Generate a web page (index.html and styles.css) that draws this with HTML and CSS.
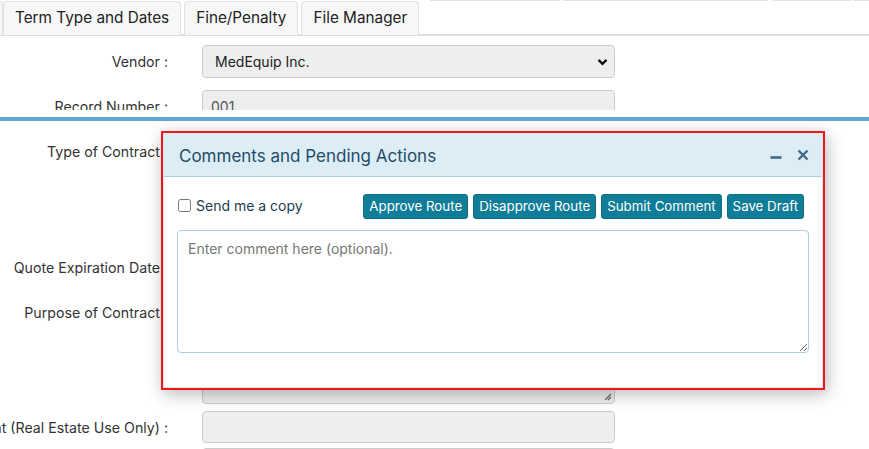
FILE: index.html
```html
<!DOCTYPE html>
<html lang="en">
<head>
<meta charset="utf-8">
<title>Contract</title>
<link rel="stylesheet" href="styles.css">
</head>
<body>
<div class="page">
  <div class="top-frame">
    <div class="tabs-above">
      <span class="seg seg1"></span>
      <span class="seg seg2"></span>
      <span class="seg seg3"></span>
      <span class="seg seg4"></span>
    </div>
    <div class="tabbar">
      <div class="tab tab-cut"></div>
      <div class="tab">Term Type and Dates</div>
      <div class="tab">Fine/Penalty</div>
      <div class="tab">File Manager</div>
    </div>
    <div class="form form-top">
      <div class="row">
        <div class="label">Vendor :</div>
        <div class="field select">
          <span>MedEquip Inc.</span>
          <svg class="chev" width="11" height="8" viewBox="0 0 11 8"><path d="M1.5 1.8 L5.5 5.8 L9.5 1.8" fill="none" stroke="#111" stroke-width="2.4"/></svg>
        </div>
      </div>
      <div class="row">
        <div class="label">Record Number :</div>
        <div class="field input muted">001</div>
      </div>
    </div>
  </div>
  <div class="bluebar"></div>
  <div class="form form-bottom">
    <div class="row">
      <div class="label">Type of Contract :</div>
      <div class="field input"></div>
    </div>
    <div class="row">
      <div class="label"></div>
      <div class="field spacer"></div>
    </div>
    <div class="row">
      <div class="label">Quote Expiration Date :</div>
      <div class="field input"></div>
    </div>
    <div class="row row-top gap-s">
      <div class="label">Purpose of Contract :</div>
      <div class="field area">
        <svg class="grip" width="9" height="9" viewBox="0 0 9 9"><path d="M8 2 L2 8 M8 5 L5 8" stroke="#666" stroke-width="1.2"/></svg>
      </div>
    </div>
    <div class="row gap-xs">
      <div class="label">Rent Amount (Real Estate Use Only) :</div>
      <div class="field input"></div>
    </div>
    <div class="row">
      <div class="label"></div>
      <div class="field input"></div>
    </div>
  </div>

  <div class="dialog">
    <div class="panel">
      <div class="panel-head">
        <div class="panel-title">Comments and Pending Actions</div>
        <div class="panel-tools">
          <svg width="12" height="12" viewBox="0 0 12 12"><path d="M0.5 8.5 H11.5" stroke="#3e6a85" stroke-width="2.6"/></svg>
          <svg width="12" height="12" viewBox="0 0 12 12"><path d="M1.5 1.5 L10.5 10.5 M10.5 1.5 L1.5 10.5" stroke="#3e6a85" stroke-width="2.4"/></svg>
        </div>
      </div>
      <div class="panel-body">
        <div class="actions">
          <label class="copy"><input type="checkbox"> Send me a copy</label>
          <div class="btns">
            <button class="btn">Approve Route</button>
            <button class="btn">Disapprove Route</button>
            <button class="btn">Submit Comment</button>
            <button class="btn">Save Draft</button>
          </div>
        </div>
        <textarea class="comment" placeholder="Enter comment here (optional)."></textarea>
      </div>
    </div>
  </div>
</div>
</body>
</html>
```

FILE: styles.css
```css
* { box-sizing: border-box; }
html, body { margin: 0; padding: 0; background: #fff; }
body {
  font-family: Inter, "Noto Sans", sans-serif;
  font-size: 14px;
  color: #333;
  overflow: hidden;
}
.page { position: relative; width: 869px; height: 449px; overflow: hidden; }

.top-frame { height: 110px; overflow: hidden; }
.tabs-above { display: flex; height: 1px; }
.seg { height: 1px; background: #e3e3e3; }
.seg1 { margin-left: 430px; width: 130px; }
.seg2 { margin-left: 3px; width: 205px; }
.seg3 { margin-left: 4px; width: 80px; }
.seg4 { margin-left: 2px; flex: 1; }

.tabbar {
  display: flex;
  height: 35px;
  border-bottom: 2px solid #dedede;
}
.tab {
  height: 34px;
  margin-right: 3px;
  padding: 0 11px 2px 11px;
  display: flex;
  align-items: center;
  font-size: 15.3px;
  color: #222;
  background: #f7f7f7;
  border: 1px solid #e2e2e2;
  border-bottom: none;
  border-radius: 4px 4px 0 0;
}
.tab-cut { width: 3px; padding: 0; margin-right: 0; border-left: none; border-radius: 0 4px 0 0; }

.form-top { padding-top: 9px; }
.row { display: flex; align-items: center; margin-bottom: 12px; }
.row-top { align-items: flex-start; }
.gap-s { margin-bottom: 7px; }
.gap-xs { margin-bottom: 5px; }
.label {
  width: 168px;
  flex: none;
  white-space: nowrap;
  overflow: hidden;
  display: flex;
  justify-content: flex-end;
  font-size: 14.2px;
  color: #333;
}
.row-top .label { padding-top: 9px; }
.field {
  margin-left: 34px;
  width: 413px;
  flex: none;
  height: 32px;
  background: #eeeeee;
  border: 1px solid #cccccc;
  border-radius: 4px;
}
.select {
  height: 33px;
  display: flex;
  align-items: center;
  justify-content: space-between;
  padding: 0 6px 0 12px;
  color: #222;
}
.chev { display: block; }
.input { display: flex; align-items: center; padding-left: 8px; }
.muted { color: #555; }
.spacer { height: 60px; background: transparent; border: none; }
.area { height: 109px; position: relative; display: flex; align-items: flex-end; justify-content: flex-end; padding: 0 2px 2px 0; }
.grip { display: block; }

.bluebar { height: 4px; margin-top: 7px; background: #63a7d9; }
.form-bottom { padding-top: 14px; }

.dialog {
  position: absolute;
  left: 161px;
  top: 131px;
  width: 664px;
  height: 259px;
  border: 2px solid #f2161c;
  background: #fff;
  box-shadow: 2px 4px 16px rgba(0, 0, 0, 0.28);
}
.panel { height: 100%; border: 1px solid #d7e6ef; border-top: none; }
.panel-head {
  height: 44px;
  background: #ddedf6;
  border-bottom: 1px solid #a9d0e6;
  display: flex;
  align-items: center;
  justify-content: space-between;
  padding: 0 13px 0 15px;
}
.panel-title { font-size: 17px; color: #1e4c69; padding-top: 2px; }
.panel-tools { display: flex; gap: 15px; align-items: center; }
.panel-tools svg { display: block; }
.panel-body { padding: 17px 13px 0 13px; }
.actions {
  display: flex;
  justify-content: space-between;
  align-items: center;
  padding-right: 5px;
  margin-bottom: 11px;
}
.copy { display: flex; align-items: center; color: #1d3c51; font-size: 14px; gap: 5px; margin-top: -3px; }
.copy input { margin: 0 0 0 1px; width: 13px; height: 13px; }
.btns { display: flex; gap: 5px; }
.btn {
  font-family: Inter, "Noto Sans", sans-serif;
  font-size: 13.3px;
  color: #fff;
  background: #0f7c98;
  border: 1px solid #0b6e88;
  border-radius: 3px;
  height: 25px;
  padding: 0 5px;
  line-height: 23px;
}
.comment {
  display: block;
  width: 632px;
  height: 123px;
  border: 1px solid #a8d0e6;
  border-radius: 4px;
  padding: 9px 10px;
  font-family: Inter, "Noto Sans", sans-serif;
  font-size: 14px;
  resize: both;
}
.comment::placeholder { color: #777; }
```
